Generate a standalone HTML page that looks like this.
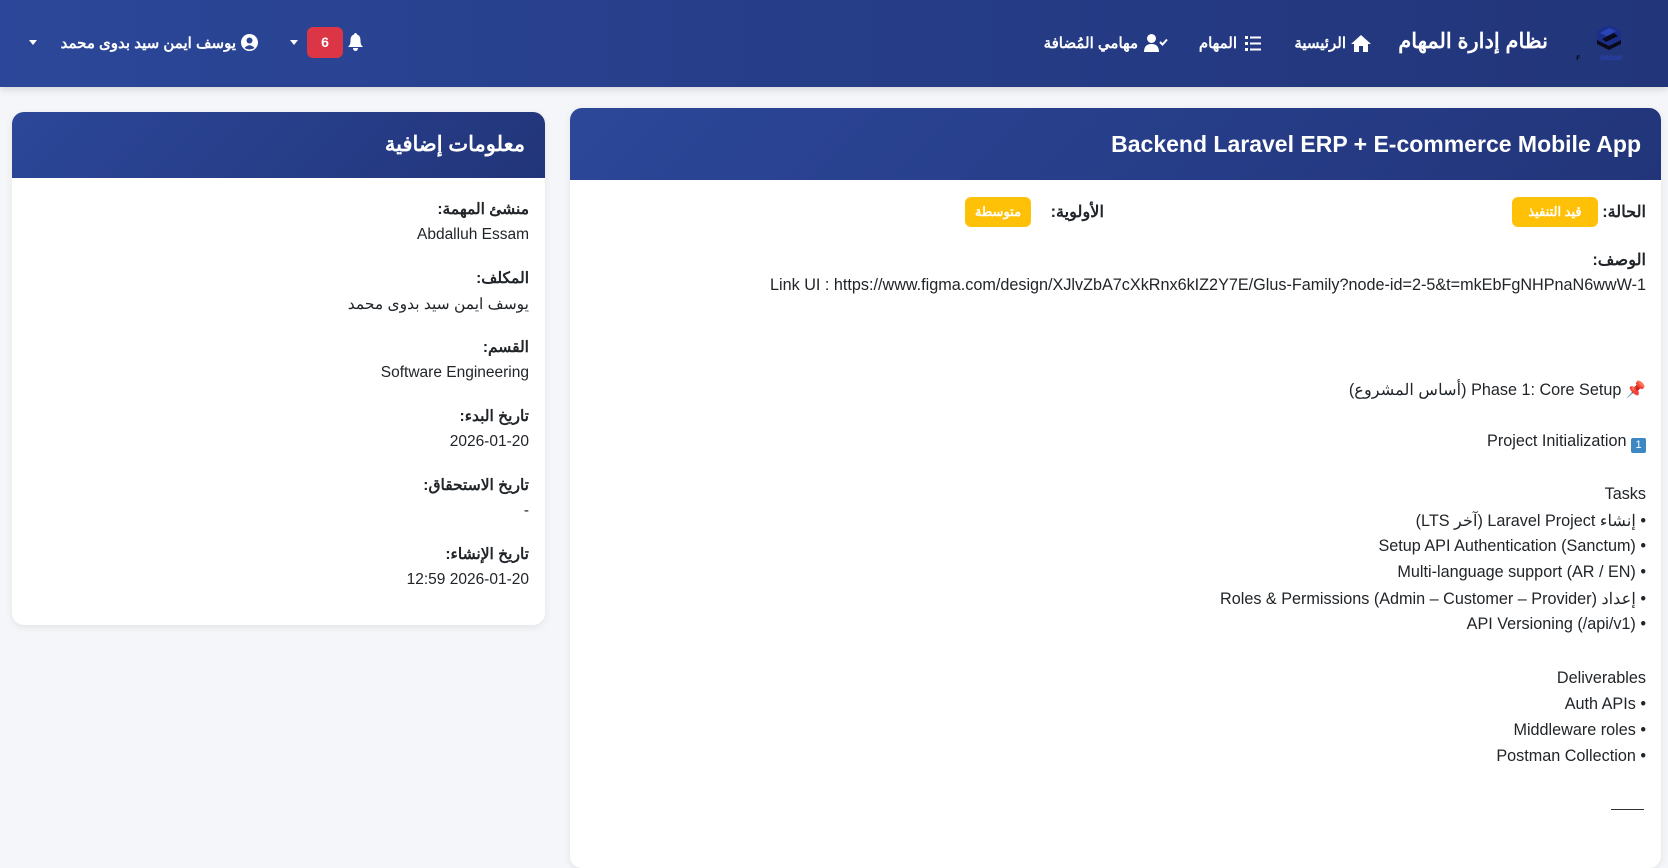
<!DOCTYPE html>
<html lang="ar" dir="rtl">
<head>
<meta charset="utf-8">
<style>
*{box-sizing:border-box;margin:0;padding:0}
html,body{width:1668px;height:849px;overflow:hidden;background:#f5f6f9;font-family:"Liberation Sans","Noto Sans CJK SC",sans-serif;color:#212529}
.nav{position:absolute;left:0;top:0;width:1668px;height:87px;background:linear-gradient(90deg,#2c4799 0%,#263d88 50%,#22357a 100%);box-shadow:0 2px 8px rgba(0,0,0,.15)}
.abs{position:absolute;white-space:nowrap}
.nl{color:#fff;font-size:15px;font-weight:bold;top:34px}
.card{position:absolute;background:#fff;border-radius:12px;box-shadow:0 2px 8px rgba(0,0,0,.08);overflow:hidden}
.ch{position:absolute;left:0;right:0;top:0;background:linear-gradient(135deg,#2c4799,#22357a);color:#fff}
.t{position:absolute;white-space:nowrap;font-size:16.2px;direction:rtl}
.lc .t{font-size:15.5px}
.b{font-weight:bold}
.badge{position:absolute;background:#ffc107;color:#fff;font-weight:bold;font-size:13px;border-radius:6px;text-align:center;line-height:30px;height:30px}
</style>
</head>
<body>
<div class="nav">
  <svg class="abs" style="left:1576px;top:22px" width="72" height="42" viewBox="0 0 72 42">
    <polygon points="33,3 45,9 45,22 33,28 21,22 21,9" fill="#1a2f8a"/>
    <path d="M21 18 L33 24 L45 18 L45 22 L33 28 L21 22 Z" fill="#0a0a1a"/>
    <path d="M26 17 L38 11 L42 14 L30 20 Z" fill="#0a0a1a"/>
    <path d="M24 11 L33 6 L40 9 L31 14 Z" fill="#2a45b5"/>
    <text x="4" y="38" font-size="6" font-weight="bold" fill="#000" font-family="Liberation Sans" textLength="40">SAUDI GULF</text>
    <text x="46" y="38" font-size="6" font-weight="bold" fill="#2a44b8" font-family="Liberation Sans" textLength="22">GROUP</text>
  </svg>
  <div class="abs" style="right:120px;top:29px;color:#fff;font-size:21px;font-weight:bold">نظام إدارة المهام</div>
  <div class="abs nl" style="right:322px">الرئيسية</div>
  <svg class="abs" style="left:1351px;top:35px" width="20" height="17" viewBox="0 0 20 17"><path d="M10 0 L20 9 L17 9 L17 17 L12 17 L12 11 L8 11 L8 17 L3 17 L3 9 L0 9 Z" fill="#fff"/></svg>
  <div class="abs nl" style="right:431px">المهام</div>
  <svg class="abs" style="left:1245px;top:36px" width="16" height="15" viewBox="0 0 16 15"><g fill="#fff"><rect x="0" y="0" width="3" height="3"/><rect x="0" y="6" width="3" height="3"/><rect x="0" y="12" width="3" height="3"/><rect x="5" y="0.5" width="11" height="2"/><rect x="5" y="6.5" width="11" height="2"/><rect x="5" y="12.5" width="11" height="2"/></g></svg>
  <div class="abs nl" style="right:530px">مهامي المُضافة</div>
  <svg class="abs" style="left:1144px;top:34px" width="24" height="18" viewBox="0 0 24 18"><circle cx="7.5" cy="4.5" r="4.5" fill="#fff"/><path d="M0 18 Q0 10 7.5 10 Q15 10 15 18 Z" fill="#fff"/><path d="M16 8 L18.5 10.5 L23 5.5" stroke="#fff" stroke-width="2" fill="none"/></svg>
  <svg class="abs" style="left:348px;top:33px" width="15" height="18" viewBox="0 0 15 18"><path d="M7.5 0 C8.5 0 9 1 9 1.5 C12 2.5 12.5 5 12.5 8 C12.5 11 13.5 12.5 15 14 L0 14 C1.5 12.5 2.5 11 2.5 8 C2.5 5 3 2.5 6 1.5 C6 1 6.5 0 7.5 0 Z M5 15 L10 15 C10 17 8.5 18 7.5 18 C6.5 18 5 17 5 15 Z" fill="#fff"/></svg>
  <div class="abs" style="left:307px;top:27px;width:36px;height:31px;background:#dc3545;border-radius:6px;color:#fff;font-size:14px;font-weight:bold;text-align:center;line-height:31px">6</div>
  <div class="abs" style="left:290px;top:40px;width:0;height:0;border-left:4px solid transparent;border-right:4px solid transparent;border-top:5px solid #fff"></div>
  <svg class="abs" style="left:241px;top:34px" width="17" height="17" viewBox="0 0 17 17"><circle cx="8.5" cy="8.5" r="8.5" fill="#fff"/><circle cx="8.5" cy="6.5" r="3" fill="#2a4490"/><path d="M3.5 14 Q8.5 8.5 13.5 14 Q8.5 17 3.5 14 Z" fill="#2a4490"/></svg>
  <div class="abs nl" style="left:46px;width:190px;text-align:right">يوسف ايمن سيد بدوى محمد</div>
  <div class="abs" style="left:29px;top:40px;width:0;height:0;border-left:4px solid transparent;border-right:4px solid transparent;border-top:5px solid #fff"></div>
</div>

<div class="card lc" style="left:12px;top:112px;width:533px;height:513px">
  <div class="ch" style="height:66px"><div class="t b" style="right:20px;top:20px;font-size:21px">معلومات إضافية</div></div>
  <div class="t b" style="right:16px;top:88px">منشئ المهمة:</div>
  <div class="t" style="right:16px;top:114px">Abdalluh Essam</div>
  <div class="t b" style="right:16px;top:157px">المكلف:</div>
  <div class="t" style="right:16px;top:183px">يوسف ايمن سيد بدوى محمد</div>
  <div class="t b" style="right:16px;top:226px">القسم:</div>
  <div class="t" style="right:16px;top:252px">Software Engineering</div>
  <div class="t b" style="right:16px;top:295px">تاريخ البدء:</div>
  <div class="t" style="right:16px;top:321px">2026-01-20</div>
  <div class="t b" style="right:16px;top:364px">تاريخ الاستحقاق:</div>
  <div class="t" style="right:16px;top:390px">-</div>
  <div class="t b" style="right:16px;top:433px">تاريخ الإنشاء:</div>
  <div class="t" style="right:16px;top:459px;direction:ltr">12:59 2026-01-20</div>
</div>

<div class="card" style="left:570px;top:108px;width:1091px;height:760px">
  <div class="ch" style="height:72px"><div class="abs" style="right:20px;top:23px;font-size:23px;font-weight:bold;direction:ltr">Backend Laravel ERP + E-commerce Mobile App</div></div>
  <div class="t b" style="right:15px;top:94px">الحالة:</div>
  <div class="badge" style="left:942px;top:89px;width:86px">قيد التنفيذ</div>
  <div class="t b" style="right:557px;top:94px">الأولوية:</div>
  <div class="badge" style="left:395px;top:89px;width:66px">متوسطة</div>
  <div class="t b" style="right:15px;top:142px">الوصف:</div>
  <div class="t" style="right:15px;top:168px;direction:ltr">Link UI : https://www.figma.com/design/XJlvZbA7cXkRnx6kIZ2Y7E/Glus-Family?node-id=2-5&amp;t=mkEbFgNHPnaN6wwW-1</div>
  <div class="t" style="right:15px;top:272px"><span style="color:#e0245e">📌</span> Phase 1: Core Setup (أساس المشروع)</div>
  <div class="t" style="right:15px;top:324px"><span style="display:inline-block;width:15px;height:15px;background:#3b88c3;color:#fff;font-size:11px;text-align:center;line-height:15px;border-radius:2px;vertical-align:-2px">1</span> Project Initialization</div>
  <div class="t" style="right:15px;top:377px">Tasks</div>
  <div class="t" style="right:15px;top:403px">• إنشاء Laravel Project (آخر LTS)</div>
  <div class="t" style="right:15px;top:429px">• Setup API Authentication (Sanctum)</div>
  <div class="t" style="right:15px;top:455px">• Multi-language support (AR / EN)</div>
  <div class="t" style="right:15px;top:481px">• إعداد Roles &amp; Permissions (Admin – Customer – Provider)</div>
  <div class="t" style="right:15px;top:507px">• API Versioning (/api/v1)</div>
  <div class="t" style="right:15px;top:561px">Deliverables</div>
  <div class="t" style="right:15px;top:587px">• Auth APIs</div>
  <div class="t" style="right:15px;top:613px">• Middleware roles</div>
  <div class="t" style="right:15px;top:639px">• Postman Collection</div>
  <div class="abs" style="left:1041px;top:701px;width:33px;height:1px;background:#333"></div>
</div>
</body>
</html>
